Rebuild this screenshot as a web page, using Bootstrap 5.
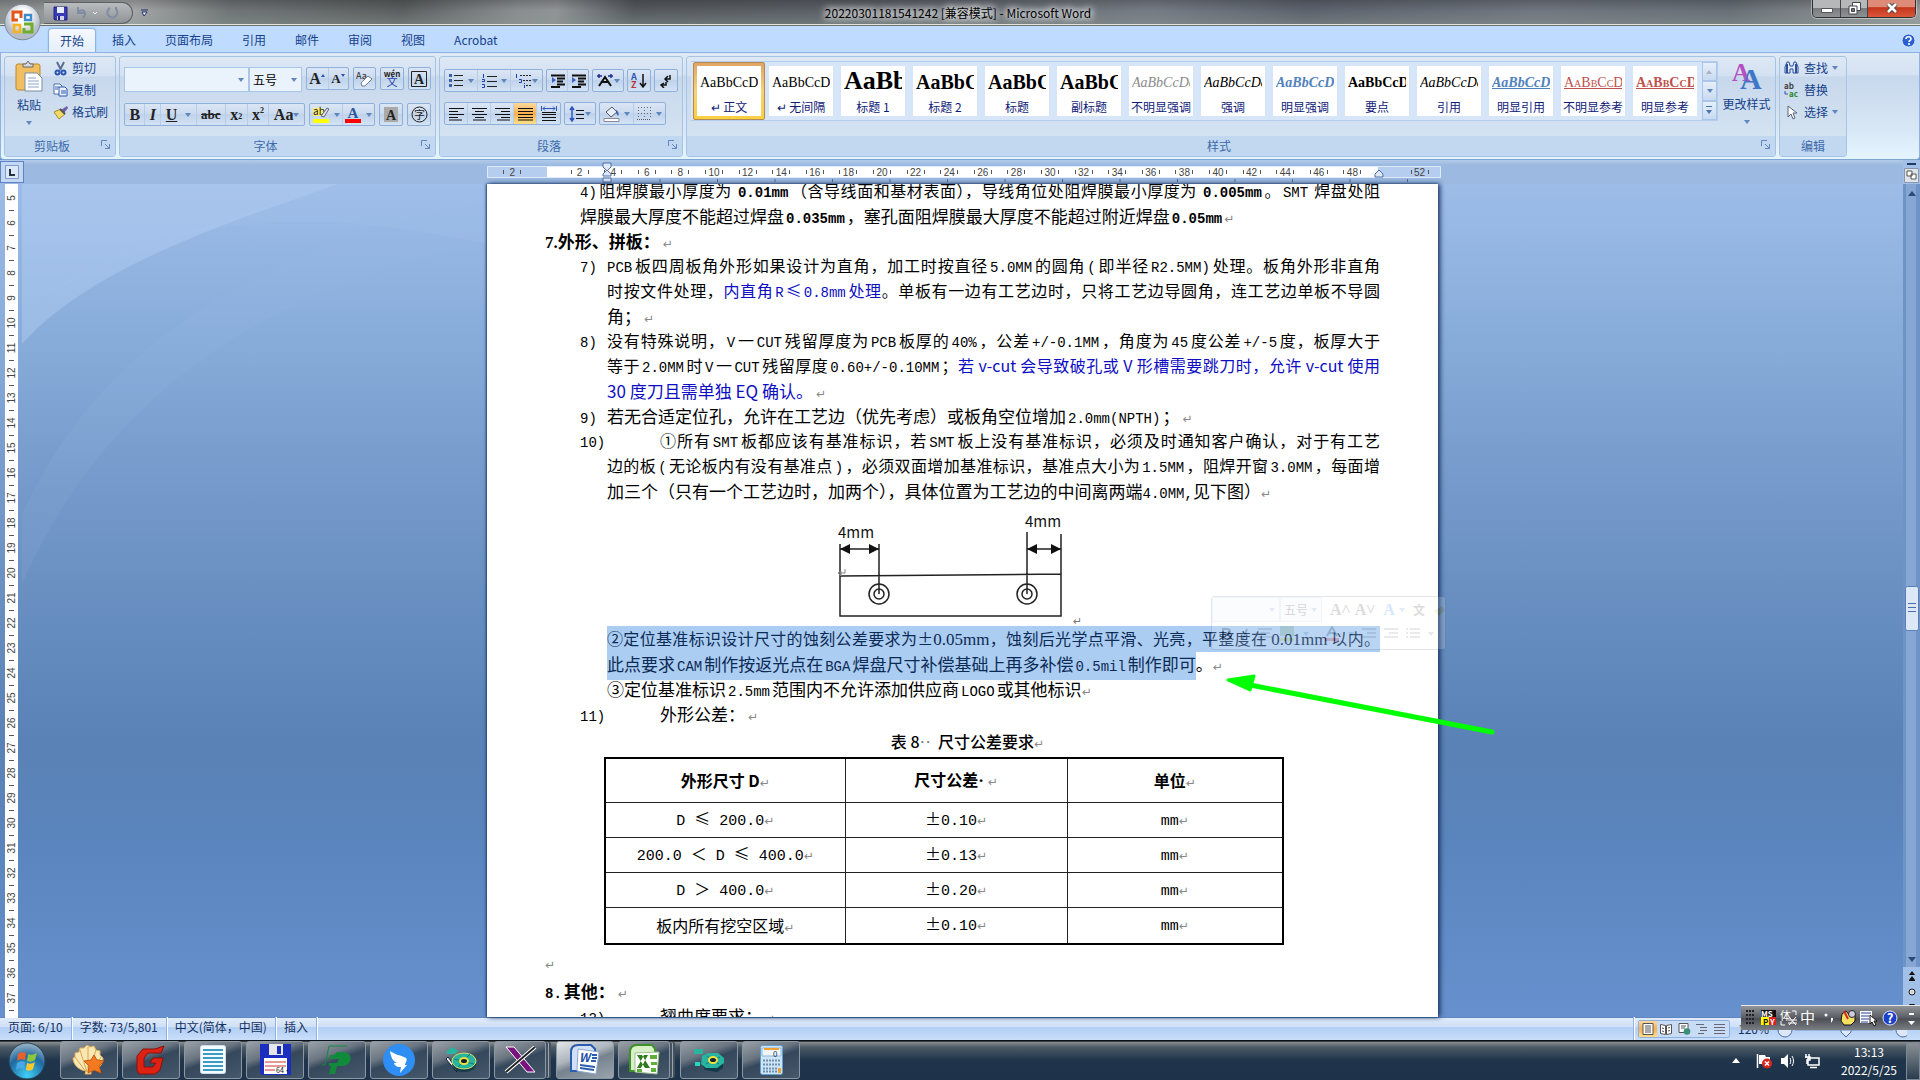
<!DOCTYPE html>
<html lang="zh-CN">
<head>
<meta charset="utf-8">
<meta name="viewport" content="width=device-width, initial-scale=1">
<title>20220301181541242 [兼容模式] - Microsoft Word</title>
<link href="https://cdn.jsdelivr.net/npm/bootstrap@5.3.0/dist/css/bootstrap.min.css" rel="stylesheet">
<style>
body{font:12px/16px "Noto Sans CJK SC",sans-serif;color:#15428b;height:100vh;overflow:hidden;background:#6690cc}
svg{display:block;flex:none}
button,select{font-family:inherit}
.btn{--bs-btn-padding-x:0px;--bs-btn-padding-y:0px;--bs-btn-font-size:12px;--bs-btn-line-height:16px;--bs-btn-border-radius:0;--bs-btn-border-width:0;--bs-btn-color:#15428b}
/* title bar */
.titlebar{flex:none;height:26px;background:linear-gradient(#0003,#0000 40%,#8b9a9366 92%,#e8eee4 94%,#333 100%),linear-gradient(100deg,#8a8d8e 0,#a5a7a8 7%,#707476 12%,#5b5e60 21%,#8a8d90 27%,#909396 29%,#55595e 33%,#5d6269 46%,#757b84 60%,#5c626c 68%,#70767f 80%,#686f77 90%,#9a9d9f 100%)}
.doctitle{color:#000;line-height:26px;text-shadow:0 0 6px #fff,0 0 8px #ffffffcc,0 0 10px #fff}
.sidecap{flex:1 1 0}
.quick{margin:2px 0 0 44px;width:89px;height:22px;border:1px solid #5d6063;border-left:0;border-radius:0 12px 12px 0;background:linear-gradient(#b9bcbe,#909395);padding:0 0 0 9px;gap:8px}
.winbtns{width:104px;height:18px;border:1px solid #2e3032;border-top:0;border-radius:0 0 5px 5px;box-shadow:0 0 0 1px #ffffff66;overflow:hidden}
.winbtns .btn{background:linear-gradient(#b5b7b9 0 45%,#77797c 46%,#8f9294);border-right:1px solid #444}
.winbtns .btn.shut{background:linear-gradient(#dd8a78 0 40%,#c5351b 45%,#d9573a);border:0}
.winmin{width:28px}
.winmax{width:27px}
.orb{left:4px;top:3px;width:37px;height:38px;z-index:5}
/* tabs */
.tabrow{flex:none;height:26px;background:#bfdbff;padding-left:48px}
.tabrow a{padding:0 14px;height:24px;line-height:23px;margin-right:1px;color:#15428b;text-decoration:none;border:0}
.tabrow a.now{background:linear-gradient(#f6faff,#e5eefb);border:1px solid #8db2e3;border-bottom:0;border-radius:4px 4px 0 0;padding:0 11px;margin-right:2px;box-shadow:0 0 2px #7fd0e8}
/* ribbon */
.ribbon{flex:none;height:108px;padding:3px 4px 2px 3px;gap:3px;background:linear-gradient(#dfe9f5,#d4e2f3 20%,#c7d8ed 22%,#d9e8f6 75%,#e3f4ff 97%);border:1px solid #8db2e3;border-radius:0 0 4px 4px;border-bottom:1px solid #7fa5d0}
.grp{border:1px solid #a7c3e3;border-radius:3px;background:linear-gradient(#dee8f5,#d3e1f2 19%,#c8d8ec 20%,#d8e6f3);overflow:hidden;box-shadow:0 0 1px #f4fbff}
.g-clip{width:112px}.g-font{width:317px}.g-para{width:244px}.g-style{width:1090px}.g-edit{width:68px}
.grpname{height:20px;background:#c1d8f0;color:#3e6aaa;line-height:20px;text-align:center}
.grpname svg{position:absolute;right:5px;top:4px}
.bset{border:1px solid #8fb0da;border-radius:2px;height:23px;background:linear-gradient(#dbe6f5,#cbdaee 48%,#bfd2ea 50%,#d3e3f5)}
.bset .btn{flex:1 1 auto;display:flex;align-items:center;justify-content:center;color:#222}
.bset .btn+.btn{border-left:1px solid #b6cde9}
.w24{width:24px}.w32{width:32px}.w44{width:44px}.w67{width:67px}.w99{width:99px}.w117{width:117px}.w182{width:182px}
.frow1{padding-top:10px}.frow2{padding-top:11px}.prow1{padding-top:12px;gap:3px}.prow2{padding-top:10px;gap:3px}
.serifb{font:bold 16px/20px "Liberation Serif",serif}
.bset .sm13{font-size:13px}
.bset .tiny{font-size:8px}
.combo{height:25px;border:1px solid #a9c5e8;background:#eaf2fb;appearance:none;font-size:12px;color:#000;padding:0 3px;border-radius:0}
.c-name{width:125px}.c-size{width:53px}
.dn{border:4px solid transparent;border-top-color:#5f86bd;border-bottom:0;border-left-width:3px;border-right-width:3px;display:inline-block;flex:none}
.combowrap .dn{position:absolute;right:5px;top:11px}
.lit{background:linear-gradient(#fbd9a0,#f8b04c 50%,#fde08a)!important}
.gallery{width:1027px;height:60px;border:1px solid #b3cdeb;border-left:0;background:#d6e6f8;padding-left:2px}
.sty{width:72px;height:58px;padding:4px!important;flex:none}
.sty .face{background:#fff;width:64px;height:50px;overflow:hidden;color:#000;padding:0 3px}
.sty .face b{display:block;height:33px;line-height:33px;overflow:hidden;white-space:nowrap;text-align:left;font-family:"Liberation Serif",serif;font-size:14px;font-weight:400}
.sty .face span{display:block;color:#101a78;line-height:16px;white-space:nowrap;margin:0 -3px}
.sty.picked{background:linear-gradient(#e0a566,#f6d27a,#f9cf40);border:1px solid #b58a50;border-radius:2px;padding:3px!important}
.sty .face .h1x{font-size:26px;font-weight:700;line-height:30px}
.sty .face .h2x{font-size:20px;font-weight:700}
.cgrey{color:#8a8a8a}.cblue{color:#4f81bd}.cred{color:#c0504d;font-variant:small-caps}
.galscroll{width:15px;margin-left:auto}
.galscroll .btn{flex:1;border:1px solid #a9c5e8;background:linear-gradient(#e6effa,#c8daf0);display:flex;align-items:center;justify-content:center}
.iconrow{height:22px;display:flex!important;align-items:center;gap:4px;white-space:nowrap}
/* rulers and work area */
.hrule{flex:none;height:24px;background:linear-gradient(#b3cbea,#9cbae1 20%)}
.tabstop{width:24px;height:22px;border:1px solid #5d82c6;background:#c5d8f3;margin-top:1px}
.scrollcol{width:17px;background:#a3c0e8}
.work{flex:1 1 0;min-height:0;background:linear-gradient(#9dbce8,#86abd9 20%,#7398c9 38%,#5a82b6 67%,#5a84bc 78%,#6791ce 100%)}
.vrule{width:22px}
.sheet{width:951px;background:#fff;box-shadow:2px 0 5px #14305c,-1px 0 2px #2a4a7c;overflow:hidden;padding:0 58px}
.deskarc{left:0;top:0;z-index:0}
/* document text */
.doc{margin-top:-6px;color:#000;font-size:17px;line-height:25px;font-weight:400}
.doc p{margin:0;height:25px;white-space:nowrap;display:flex;align-items:baseline}
.ind1{padding-left:35px}
.no{width:27px;flex:none}
.no2{width:80px;flex:none}
.jl{flex:1;text-align:justify;text-align-last:justify;font-size:16px;white-space:nowrap}
.hw{font-family:"Liberation Mono","Noto Sans CJK SC",monospace;font-size:14px;margin:0 2px}
.tm{font-family:"Liberation Serif",serif;font-size:17px}
.blue{color:#0d0dc4}
.cr{font:12px/25px "DejaVu Sans",sans-serif;color:#888;margin-left:3px}
.picked-text{background:#abcdf1;color:#0b2a55}
.tolcap{height:30px;line-height:30px;text-align:center;font-size:16px;font-weight:500;padding-left:10px}
.tol{width:680px;margin-left:59px;border-collapse:collapse;border:2px solid #000;font-size:16px;line-height:22px;text-align:center;margin-top:1px}
.tol th,.tol td{border:1px solid #222;height:35px;padding:0}
.tol th{height:44px;font-weight:700}
.tol tr:last-child td{height:37px}
.tol .c1{width:240px}.tol .c2{width:222px}
.tol .hw{font-size:15px;margin:0}
.tol .ge{font:16px/22px "Noto Sans CJK SC",sans-serif}
.tol .cr{margin-left:0;line-height:16px}
/* floating items */
.arrowlay{left:1220px;top:668px;z-index:4}
.minibar{left:1211px;top:596px;width:235px;height:54px;z-index:3;opacity:.17;border:1px solid #5a6f90;border-radius:3px;background:#fff;color:#333}
.minibar .c-name{width:68px}.minibar .c-size{width:42px}
.hl-y{border-bottom:3px solid #dd0}.hl-r{border-bottom:3px solid #f00}
.langbar{right:0;bottom:50px;width:179px;height:25px;z-index:5;background:linear-gradient(#e8e8e8 0 4%,#8e9196 6%,#5b5e64 50%,#4c4f55 55%,#7a7d82);color:#fff}
/* status + taskbar */
.status{flex:none;height:23px;background:linear-gradient(#5f86bd 0 4%,#dfebfa 5%,#cfe0f7 42%,#b3cff5 46%,#c9def9);color:#15315f;line-height:20px}
.status .pane{border-right:1px solid #8fb2e2;box-shadow:1px 0 0 #fff;padding:0 8px 0 8px}
.statright{width:286px}
.views{border:1px solid #8fb0de;border-radius:2px;height:18px;background:#c8dcf6}
.views .btn{width:18px;height:16px;display:flex;align-items:center;justify-content:center}
.taskbar{flex:none;height:40px;background:linear-gradient(#0a1119 0 3%,#8a8f90 5%,#4c5a66 18%,#20354b 50%,#1d3349);gap:4px;padding-top:1px;color:#fff}
.startbtn{width:56px}
.tb{width:58px;height:38px;border:1px solid #8b97a3!important;border-radius:3px!important;background:linear-gradient(160deg,#9aa0a6 0,#6b7682 35%,#35485c 50%,#46586b 100%);display:flex;align-items:center;justify-content:center;flex:none}
.tb.now{background:linear-gradient(160deg,#e4e6e8,#adb5bd 40%,#76838f 55%,#98a3ad)}
.tb.stack2{width:52px;box-shadow:3px 0 0 -1px #43515f,4px 0 0 -1px #9aa5b0,6px 0 0 -1px #43515f;margin-right:6px}
.clock{width:66px;text-align:center;line-height:18px}
.peek{width:14px;border:1px solid #7c8893;height:38px;background:linear-gradient(#8b9296,#2a3c4f)}
</style>
</head>
<body class="d-flex flex-column">

<header class="titlebar d-flex position-relative">
  <div class="sidecap d-flex">
    <div class="quick d-flex align-items-center">
      <button class="btn" aria-label="保存"><svg width="15" height="15"><path d="M1 1h13v13H2l-1-1z" fill="#3a3ab8" stroke="#22227a"/><path d="M4 1h7v6H4z" fill="#e8ecff"/><path d="M4 10h7v4H4z" fill="#cfd3ea"/><path d="M5 10h2v4H5z" fill="#22227a"/></svg></button>
      <button class="btn" aria-label="撤消"><svg width="22" height="14"><path d="M2 1v6h6M2 7c4-6 10-1 5 5" fill="none" stroke="#7f8ca2" stroke-width="2"/><path d="M17 6l2 2 2-2" fill="none" stroke="#eee"/></svg></button>
      <button class="btn" aria-label="恢复"><svg width="13" height="14"><path d="M4 2a5 5 0 1 0 6 1V1" fill="none" stroke="#7f8ca2" stroke-width="2"/></svg></button>
    </div>
    <button class="btn ms-2" aria-label="自定义快速访问工具栏"><svg width="8" height="8"><path d="M0 1h7M1 3h5l-3 4z" stroke="#1b2f70" fill="#fff"/></svg></button>
  </div>
  <div class="doctitle">20220301181541242 [兼容模式] - Microsoft Word</div>
  <div class="sidecap d-flex justify-content-end pe-1">
    <div class="winbtns d-flex">
      <button class="btn winmin" aria-label="最小化"><svg class="mx-auto mt-1" width="12" height="5"><path d="M.5.5h11v4H.5z" fill="#fff" stroke="#555"/></svg></button>
      <button class="btn winmax" aria-label="还原"><svg class="mx-auto" width="13" height="13"><path d="M4.500.5h8v8h-8z" fill="#fff" stroke="#444"/><path d="M1 4h8v8H1z" fill="#fff" stroke="#444"/><path d="M3.500 6.500h3v3h-3z" fill="#777" stroke="#444"/></svg></button>
      <button class="btn shut flex-fill" aria-label="关闭"><svg class="mx-auto" width="12" height="11"><path d="M2 1l8 8M10 1L2 9" stroke="#444" stroke-width="4.500"/><path d="M2 1l8 8M10 1L2 9" stroke="#fff" stroke-width="2.600"/></svg></button>
    </div>
  </div>
  <button class="btn orb position-absolute" aria-label="Office 按钮"><svg width="38" height="38" viewBox="0 0 38 38"><defs><radialGradient id="og" cy=".35"><stop offset=".4" stop-color="#fff"/><stop offset="1" stop-color="#b4bcc9"/></radialGradient></defs><circle cx="18.500" cy="19" r="17.800" fill="url(#og)" stroke="#7d8794"/><g fill="none" stroke-width="3"><path d="M17 15V9H9v8h5" stroke="#e2561b"/><path d="M21 17h6v-5h-6z" stroke="#3f8ccc" stroke-width="2.400"/><path d="M16 22H10v7h6z" stroke="#f6b21c" stroke-width="2.600"/><path d="M20 21h8v8h-8v-4" stroke="#6fae2c"/></g></svg></button>
</header>

<nav class="tabrow d-flex align-items-end">
  <a class="now" href="#">开始</a><a href="#">插入</a><a href="#">页面布局</a><a href="#">引用</a><a href="#">邮件</a><a href="#">审阅</a><a href="#">视图</a><a href="#">Acrobat</a>
  <button class="btn ms-auto me-1 mb-1" aria-label="帮助"><svg width="15" height="15"><circle cx="7.500" cy="7.500" r="6.500" fill="#2a5fd0" stroke="#cfe0ff"/><path d="M5 6c0-3 5-3 5 0 0 2-2 1-2 3M8 10v2" fill="none" stroke="#fff" stroke-width="1.600"/></svg></button>
</nav>

<section class="ribbon d-flex">
  <!-- clipboard -->
  <div class="grp g-clip d-flex flex-column">
    <div class="d-flex flex-fill">
      <button class="btn d-flex flex-column align-items-center ms-2 w32"><svg class="mt-1" width="28" height="32"><rect x="1" y="3" width="24" height="26" rx="2" fill="#f0bf62" stroke="#b98930"/><path d="M8 5V3h3l2-3 2 3h3v3H8z" fill="#d9dde2" stroke="#666"/><path d="M10 12h12l5 5v13H10z" fill="#fff" stroke="#7a8ba5"/><path d="M13 17h8m-8 3h11m-11 3h11m-11 3h11" stroke="#8ba4c8"/></svg><span class="mt-1">粘贴</span><i class="dn mt-2"></i></button>
      <div class="ms-2">
        <button class="btn iconrow"><svg width="15" height="15"><path d="M4 1l4 8M11 1L7 9" stroke="#5a6f95" stroke-width="2"/><circle cx="4.500" cy="11.500" r="2" fill="none" stroke="#2b56b0" stroke-width="2"/><circle cx="10.500" cy="11.500" r="2" fill="none" stroke="#2b56b0" stroke-width="2"/></svg>剪切</button>
        <button class="btn iconrow"><svg width="15" height="14"><path d="M1 1h6l2 2v8H1z" fill="#fff" stroke="#4b6ea8"/><path d="M6 4h6l2 2v7H6z" fill="#eaf2ff" stroke="#2b56b0"/><path d="M2 4h4M2 6h3M8 8h5M8 10h5" stroke="#2b56b0"/></svg>复制</button>
        <button class="btn iconrow"><svg width="15" height="15"><path d="M8 5l6-4 1 2-4 5z" fill="#6f5fa8"/><path d="M1 7l7-3 4 5-6 5z" fill="#f3d968" stroke="#a78a28"/><path d="M7 4l5 5" stroke="#555" stroke-width="2"/></svg>格式刷</button>
      </div>
    </div>
    <div class="grpname position-relative pe-3">剪贴板<svg width="9" height="9"><path d="M.5 6V.5H6M4 4l4 4M8.500 4v4.500H4" fill="none" stroke="#5f86bd"/></svg></div>
  </div>
  <!-- font -->
  <div class="grp g-font d-flex flex-column">
    <div class="flex-fill px-1">
      <div class="d-flex gap-1 frow1">
        <div class="d-flex">
          <div class="combowrap position-relative"><select class="combo c-name" aria-label="字体"><option></option></select><i class="dn"></i></div>
          <div class="combowrap position-relative"><select class="combo c-size" aria-label="字号"><option>五号</option></select><i class="dn"></i></div>
        </div>
        <div class="bset d-flex w44"><button class="btn serifb">A<svg width="5" height="12"><path d="M0 4h4L2 1z" fill="#2b56b0"/></svg></button><button class="btn serifb sm13">A<svg width="5" height="12"><path d="M0 1h4L2 4z" fill="#2b56b0"/></svg></button></div>
        <div class="bset d-flex w24"><button class="btn" aria-label="清除格式"><svg width="17" height="17"><text x="0" y="9" font-size="9" fill="#222">Aa</text><path d="M5 13l7-7 4 3-7 7H6z" fill="#fff" stroke="#6b7f9c"/></svg></button></div>
        <div class="bset d-flex w24"><button class="btn" aria-label="拼音指南"><svg width="20" height="20"><text x="10" y="8" font-size="8" font-weight="bold" text-anchor="middle" fill="#222">wén</text><text x="10" y="17" font-size="11" text-anchor="middle" fill="#1f3fb0">文</text></svg></button></div>
        <div class="bset d-flex w24"><button class="btn" aria-label="字符边框"><svg width="16" height="16"><path d="M.5.5h15v15H.5z" fill="none" stroke="#222"/><text x="8" y="13" font-family="Liberation Serif" font-size="14" font-weight="bold" text-anchor="middle" fill="#222">A</text></svg></button></div>
      </div>
      <div class="d-flex gap-1 frow2">
        <div class="bset d-flex w182">
          <button class="btn serifb">B</button><button class="btn serifb fst-italic">I</button><button class="btn serifb"><u>U</u>&nbsp;<i class="dn ms-1"></i></button><button class="btn serifb sm13"><s>abc</s></button><button class="btn serifb">x<sub class="tiny">2</sub></button><button class="btn serifb">x<sup class="tiny">2</sup></button><button class="btn serifb">Aa<i class="dn"></i></button>
        </div>
        <div class="bset d-flex w67">
          <button class="btn" aria-label="突出显示"><svg width="18" height="18"><path d="M1 2h10v8H1z" fill="#fff36b"/><text x="1" y="9" font-size="10" fill="#222">ab</text><path d="M9 10l6-8 2 1-5 8z" fill="#dde" stroke="#667"/><path d="M1 13h16v4H1z" fill="#ff0"/></svg><i class="dn ms-1"></i></button>
          <button class="btn" aria-label="字体颜色"><svg width="17" height="18"><text x="8" y="12" font-family="Liberation Serif" font-size="15" font-weight="bold" text-anchor="middle" fill="#2b56a0">A</text><path d="M0 13h16v4H0z" fill="#f00"/></svg><i class="dn ms-1"></i></button>
        </div>
        <div class="bset d-flex w24"><button class="btn" aria-label="字符底纹"><svg width="14" height="16"><path d="M0 0h14v15H0z" fill="#a9a9a9"/><text x="7" y="13" font-family="Liberation Serif" font-size="14" font-weight="bold" text-anchor="middle" fill="#222">A</text></svg></button></div>
        <div class="bset d-flex w24"><button class="btn" aria-label="带圈字符"><svg width="17" height="17"><circle cx="8.500" cy="8.500" r="7.500" fill="none" stroke="#222"/><text x="8.500" y="12.500" font-size="11" text-anchor="middle" fill="#222">字</text></svg></button></div>
      </div>
    </div>
    <div class="grpname position-relative pe-4">字体<svg width="9" height="9"><path d="M.5 6V.5H6M4 4l4 4M8.500 4v4.500H4" fill="none" stroke="#5f86bd"/></svg></div>
  </div>
  <!-- paragraph -->
  <div class="grp g-para d-flex flex-column">
    <div class="flex-fill px-1">
      <div class="d-flex prow1">
        <div class="bset d-flex w99">
          <button class="btn" aria-label="项目符号"><svg width="15" height="15"><path d="M5 2.500h9M5 7.500h9M5 12.500h9" stroke="#222"/><path d="M0 1h3v3H0zM0 6h3v3H0zM0 11h3v3H0z" fill="#3b62a8"/></svg><i class="dn ms-1"></i></button>
          <button class="btn" aria-label="编号"><svg width="15" height="16"><path d="M5 3.500h10M5 8.500h10M5 13.500h10" stroke="#222"/><path d="M1.500 1v4M0 6.500h2.500v2H0M0 11.500h2.500v3H0" fill="none" stroke="#1f3fb0"/></svg><i class="dn ms-1"></i></button>
          <button class="btn" aria-label="多级列表"><svg width="17" height="16"><path d="M5 2.500h11M8 7.500h8M11 12.500h5" stroke="#222" stroke-dasharray="2 1"/><path d="M1.500 1v4M4 6.500h2.500v3H4M9.500 10v1M9.500 12v3" fill="none" stroke="#1f3fb0"/></svg><i class="dn"></i></button>
        </div>
        <div class="bset d-flex w44">
          <button class="btn" aria-label="减少缩进"><svg width="16" height="14"><path d="M2 1.500h14M8 4.500h8M8 7.500h6M8 10.500h8M2 13h9" stroke="#111" stroke-width="2"/><path d="M7 6L3 3v6z" fill="#3b62c8"/></svg></button>
          <button class="btn" aria-label="增加缩进"><svg width="16" height="14"><path d="M2 1.500h14M8 4.500h8M8 7.500h6M8 10.500h8M2 13h9" stroke="#111" stroke-width="2"/><path d="M2 3l4 3-4 3z" fill="#3b62c8"/></svg></button>
        </div>
        <div class="bset d-flex w32"><button class="btn" aria-label="中文版式"><svg width="17" height="15"><path d="M2 13l6-9 6 9M5 9h6" fill="none" stroke="#111" stroke-width="2"/><path d="M0 3h5M11 3h5M2 1v4M14 1v4" stroke="#1b2f90" stroke-width="1.500"/></svg><i class="dn"></i></button></div>
        <div class="bset d-flex w24"><button class="btn" aria-label="排序"><svg width="16" height="17"><text x="0" y="8" font-size="9" font-weight="bold" fill="#2b56b0">A</text><text x="0" y="16" font-size="9" font-weight="bold" fill="#b33">Z</text><path d="M12 2v12M9 11l3 4 3-4" fill="none" stroke="#111" stroke-width="1.500"/></svg></button></div>
        <div class="bset d-flex w24"><button class="btn" aria-label="显示编辑标记"><svg width="13" height="14"><path d="M10 1v4H5M8 2L5 5l3 3M6 8v3H2M4 9l-3 2 3 3" fill="none" stroke="#111" stroke-width="1.500"/></svg></button></div>
      </div>
      <div class="d-flex prow2">
        <div class="bset d-flex w117">
          <button class="btn" aria-label="左对齐"><svg width="15" height="14"><path d="M0 1.500h15M0 4.500h9M0 7.500h15M0 10.500h9M0 13h13" stroke="#111"/></svg></button>
          <button class="btn" aria-label="居中"><svg width="15" height="14"><path d="M0 1.500h15M3 4.500h9M0 7.500h15M3 10.500h9M1 13h13" stroke="#111"/></svg></button>
          <button class="btn" aria-label="右对齐"><svg width="15" height="14"><path d="M0 1.500h15M6 4.500h9M0 7.500h15M6 10.500h9M2 13h13" stroke="#111"/></svg></button>
          <button class="btn lit" aria-label="两端对齐"><svg width="15" height="14"><path d="M0 1.500h15M0 4.500h15M0 7.500h15M0 10.500h15M0 13h15" stroke="#111"/></svg></button>
          <button class="btn" aria-label="分散对齐"><svg width="16" height="16"><path d="M1 8.500h14M1 11.500h14M1 14.500h14M1 6.500h14" stroke="#111"/><path d="M.5 0v5M15.500 0v5M2 2.500h12M4 .5l-2 2 2 2M12 .5l2 2-2 2" fill="none" stroke="#2b56c0"/></svg></button>
        </div>
        <div class="bset d-flex w32"><button class="btn" aria-label="行距"><svg width="16" height="16"><path d="M3 1v14M1 4l2-3 2 3M1 12l2 3 2-3" fill="none" stroke="#2b56c0" stroke-width="1.500"/><path d="M7 4.500h8M7 8.500h8M7 12.500h8" stroke="#111"/></svg><i class="dn"></i></button></div>
        <div class="bset d-flex w67">
          <button class="btn" aria-label="底纹"><svg width="17" height="17"><path d="M3 7l6-5 5 5-6 5z" fill="#e8eef8" stroke="#556"/><path d="M13 5c3 1 3 5 2 6l-2-3" fill="#3b62a8"/><path d="M1 13.500h15v3H1z" fill="#fff" stroke="#889"/></svg><i class="dn ms-1"></i></button>
          <button class="btn" aria-label="边框"><svg width="15" height="15"><path d="M1.500 1v12M7.500 1v12M13.500 1v12M1 1.500h13M1 7.500h13" stroke="#667" stroke-dasharray="1 2"/><path d="M0 13.500h14" stroke="#556" stroke-dasharray="1 1"/></svg><i class="dn ms-1"></i></button>
        </div>
      </div>
    </div>
    <div class="grpname position-relative pe-4">段落<svg width="9" height="9"><path d="M.5 6V.5H6M4 4l4 4M8.500 4v4.500H4" fill="none" stroke="#5f86bd"/></svg></div>
  </div>
  <!-- styles -->
  <div class="grp g-style d-flex flex-column">
    <div class="d-flex flex-fill align-items-start ps-1">
      <div class="gallery d-flex mt-1">
        <button class="btn sty picked"><div class="face"><b>AaBbCcDd</b><span>↵ 正文</span></div></button>
        <button class="btn sty"><div class="face"><b>AaBbCcDd</b><span>↵ 无间隔</span></div></button>
        <button class="btn sty"><div class="face"><b class="h1x">AaBb</b><span>标题 1</span></div></button>
        <button class="btn sty"><div class="face"><b class="h2x">AaBbC</b><span>标题 2</span></div></button>
        <button class="btn sty"><div class="face"><b class="h2x">AaBbC</b><span>标题</span></div></button>
        <button class="btn sty"><div class="face"><b class="h2x">AaBbC</b><span>副标题</span></div></button>
        <button class="btn sty"><div class="face"><b class="fst-italic cgrey">AaBbCcDd</b><span>不明显强调</span></div></button>
        <button class="btn sty"><div class="face"><b class="fst-italic">AaBbCcDd</b><span>强调</span></div></button>
        <button class="btn sty"><div class="face"><b class="fst-italic fw-bold cblue">AaBbCcDd</b><span>明显强调</span></div></button>
        <button class="btn sty"><div class="face"><b class="fw-bold">AaBbCcDd</b><span>要点</span></div></button>
        <button class="btn sty"><div class="face"><b class="fst-italic">AaBbCcDd</b><span>引用</span></div></button>
        <button class="btn sty"><div class="face"><b class="fst-italic fw-bold text-decoration-underline cblue">AaBbCcDd</b><span>明显引用</span></div></button>
        <button class="btn sty"><div class="face"><b class="text-decoration-underline cred">AaBbCcDd</b><span>不明显参考</span></div></button>
        <button class="btn sty"><div class="face"><b class="fw-bold text-decoration-underline cred">AaBbCcDd</b><span>明显参考</span></div></button>
        <div class="galscroll d-flex flex-column">
          <button class="btn" aria-label="上一行"><svg width="7" height="4"><path d="M0 4h6L3 0z" fill="#a8b2c0"/></svg></button>
          <button class="btn" aria-label="下一行"><i class="dn"></i></button>
          <button class="btn" aria-label="其他"><svg width="7" height="8"><path d="M0 0h6v1H0zM0 4h6L3 8z" fill="#4b74b0"/></svg></button>
        </div>
      </div>
      <button class="btn d-flex flex-column align-items-center flex-fill"><svg class="mt-1" width="30" height="31"><g font-family="Liberation Serif" font-weight="bold"><text x="0" y="20" font-size="25" fill="#b34fc0">A</text><text x="8" y="28" font-size="30" fill="#3f78c8">A</text></g></svg><span class="mt-1">更改样式</span><i class="dn mt-2"></i></button>
    </div>
    <div class="grpname position-relative pe-4">样式<svg width="9" height="9"><path d="M.5 6V.5H6M4 4l4 4M8.500 4v4.500H4" fill="none" stroke="#5f86bd"/></svg></div>
  </div>
  <!-- editing -->
  <div class="grp g-edit d-flex flex-column">
    <div class="flex-fill ps-1">
      <button class="btn iconrow"><svg width="16" height="14"><path d="M1 12V6l2-5h2l1 4h3l1-4h2l2 5v6h-5V8H6v4z" fill="#dfe8f6" stroke="#2b4f98"/><path d="M3 3v9M12 3v9" stroke="#2b4f98" stroke-width="2"/></svg>查找<i class="dn"></i></button>
      <button class="btn iconrow"><svg width="16" height="16"><text x="0" y="7" font-size="8" font-weight="bold" fill="#444">ab</text><text x="5" y="15" font-size="8" font-weight="bold" fill="#2a8a2a">ac</text><path d="M1 9v3h3" fill="none" stroke="#2b56b0"/></svg>替换</button>
      <button class="btn iconrow"><svg width="16" height="15"><path d="M4 1v11l3-3 2 5 2-1-2-5h4z" fill="#fff" stroke="#56657d"/></svg>选择<i class="dn"></i></button>
    </div>
    <div class="grpname">编辑</div>
  </div>
</section>

<section class="hrule d-flex">
  <button class="btn tabstop" aria-label="制表符"><svg class="mx-auto" width="14" height="14"><path d="M.5.5h13v13H.5z" fill="#dce8f8" stroke="#7d9ccc"/><path d="M5 4v6h5" fill="none" stroke="#234" stroke-width="2"/></svg></button>
  <div class="flex-fill d-flex justify-content-center"><svg id="hr" width="954" height="24"></svg></div>
  <div class="scrollcol"><svg width="17" height="24"><path d="M4 3h9v2H4z" fill="#1f3a68"/><path d="M1.500 8.500h14v14h-14z" fill="#dfe3ea" stroke="#8b98ac"/><path d="M4 11h5v5H4zM8 14h5v5H8z" fill="#fff" stroke="#555"/></svg></div>
</section>

<main class="work d-flex position-relative">
  <svg class="deskarc position-absolute" width="487" height="620"><path d="M22 0h316C210 45 90 85 22 160z" fill="#b8d2f4" opacity=".4"/><path d="M22 130C120 50 260 10 487 60V0H338C200 40 80 80 22 130z" fill="#a9c8f0" opacity=".2"/><path d="M22 330C100 160 260 60 487 20v40C280 100 110 200 22 400z" fill="#9cbce8" opacity=".12"/></svg>
  <div class="vrule position-relative"><svg id="vr" width="22" height="834"></svg></div>
  <div class="flex-fill d-flex justify-content-center position-relative">
    <article class="sheet"><div class="doc">
      <p class="ind1"><span class="jl"><span class="hw ms-0">4)</span>阻焊膜最小厚度为 <span class="hw fw-bold">0.01mm</span>（含导线面和基材表面），导线角位处阻焊膜最小厚度为 <span class="hw fw-bold">0.005mm</span>。<span class="hw">SMT</span> 焊盘处阻</span></p>
      <p class="ind1">焊膜最大厚度不能超过焊盘<span class="hw fw-bold">0.035mm</span>，塞孔面阻焊膜最大厚度不能超过附近焊盘<span class="hw fw-bold">0.05mm</span><i class="cr ms-0">↵</i></p>
      <p class="fw-bold"><span class="tm">7.</span>外形、拼板：<i class="cr">↵</i></p>
      <p class="ind1"><span class="no hw m-0">7)</span><span class="jl"><span class="hw ms-0">PCB</span>板四周板角外形如果设计为直角，加工时按直径<span class="hw">5.0MM</span>的圆角<span class="hw">(</span>即半径<span class="hw">R2.5MM)</span>处理。板角外形非直角</span></p>
      <p class="ind1"><span class="no"></span><span class="jl">时按文件处理，<span class="blue">内直角<span class="hw">R</span>≤<span class="hw">0.8mm</span>处理</span>。单板有一边有工艺边时，只将工艺边导圆角，连工艺边单板不导圆</span></p>
      <p class="ind1"><span class="no"></span>角；<i class="cr">↵</i></p>
      <p class="ind1"><span class="no hw m-0">8)</span><span class="jl">没有特殊说明，<span class="hw">V</span>一<span class="hw">CUT</span>残留厚度为<span class="hw">PCB</span>板厚的<span class="hw">40%</span>，公差<span class="hw">+/-0.1MM</span>，角度为<span class="hw">45</span>度公差<span class="hw">+/-5</span>度，板厚大于</span></p>
      <p class="ind1"><span class="no"></span><span class="jl">等于<span class="hw">2.0MM</span>时<span class="hw">V</span>一<span class="hw">CUT</span>残留厚度<span class="hw">0.60+/-0.10MM</span>；<span class="blue">若 v-cut 会导致破孔或 V 形槽需要跳刀时，允许 v-cut 使用</span></span></p>
      <p class="ind1"><span class="no"></span><span class="blue">30 度刀且需单独 EQ 确认。</span><i class="cr">↵</i></p>
      <p class="ind1"><span class="no hw m-0">9)</span>若无合适定位孔，允许在工艺边（优先考虑）或板角空位增加<span class="hw">2.0mm(NPTH)</span>；<i class="cr">↵</i></p>
      <p class="ind1"><span class="no2 hw m-0">10)</span><span class="jl">①所有<span class="hw">SMT</span>板都应该有基准标识，若<span class="hw">SMT</span>板上没有基准标识，必须及时通知客户确认，对于有工艺</span></p>
      <p class="ind1"><span class="no"></span><span class="jl">边的板<span class="hw">(</span>无论板内有没有基准点<span class="hw">)</span>，必须双面增加基准标识，基准点大小为<span class="hw">1.5MM</span>，阻焊开窗<span class="hw">3.0MM</span>，每面增</span></p>
      <p class="ind1"><span class="no"></span>加三个（只有一个工艺边时，加两个），具体位置为工艺边的中间离两端<span class="hw mx-0">4.0MM,</span>见下图）<i class="cr ms-0">↵</i></p>
      <svg width="835" height="123" viewBox="545 503 835 123" font-family="Noto Sans CJK SC" font-size="15" fill="#111"><g fill="none" stroke="#222" stroke-width="1.500"><path d="M840 544v72h221v-82M840 576l221-2M879 544v50M1027 532v62M840 549h39M1027 549h34"/><circle cx="879" cy="594" r="10"/><circle cx="879" cy="594" r="5"/><circle cx="1027" cy="594" r="10"/><circle cx="1027" cy="594" r="5"/></g><path d="M840 549l10-5v10zM879 549l-10-5v10zM1027 549l10-5v10zM1061 549l-10-5v10z"/><text x="838" y="538">4mm</text><text x="1025" y="527">4mm</text><path d="M838 573l3-2v5zM845 569v4h-5" fill="none" stroke="#888"/><text x="1073" y="625" font-family="DejaVu Sans" font-size="11" fill="#777">↵</text></svg>
      <p class="ind1"><span class="no"></span><span class="jl picked-text">②定位基准标识设计尺寸的蚀刻公差要求为±<span class="tm">0.05mm</span>，蚀刻后光学点平滑、光亮，平整度在 <span class="tm">0.01mm</span> 以内。</span></p>
      <p class="ind1"><span class="no"></span><span class="picked-text">此点要求<span class="hw">CAM</span>制作按返光点在<span class="hw">BGA</span>焊盘尺寸补偿基础上再多补偿<span class="hw">0.5mil</span>制作即可</span>。<i class="cr ms-0">↵</i></p>
      <p class="ind1"><span class="no"></span>③定位基准标识<span class="hw">2.5mm</span>范围内不允许添加供应商<span class="hw">LOGO</span>或其他标识<i class="cr ms-0">↵</i></p>
      <p class="ind1"><span class="no2 hw m-0">11)</span>外形公差：<i class="cr">↵</i></p>
      <div class="tolcap">表 8<span class="tm text-secondary">··</span>&nbsp; 尺寸公差要求<i class="cr ms-0">↵</i></div>
      <table class="tol">
        <colgroup><col class="c1"><col class="c2"><col></colgroup>
        <tr><th>外形尺寸 D<i class="cr">↵</i></th><th>尺寸公差<span class="tm">·</span> <i class="cr">↵</i></th><th>单位<i class="cr">↵</i></th></tr>
        <tr><td><span class="hw">D <span class="ge">≤</span> 200.0</span><i class="cr">↵</i></td><td>±<span class="hw">0.10</span><i class="cr">↵</i></td><td><span class="hw">mm</span><i class="cr">↵</i></td></tr>
        <tr><td><span class="hw">200.0 <span class="ge">＜</span> D <span class="ge">≤</span> 400.0</span><i class="cr">↵</i></td><td>±<span class="hw">0.13</span><i class="cr">↵</i></td><td><span class="hw">mm</span><i class="cr">↵</i></td></tr>
        <tr><td><span class="hw">D <span class="ge">＞</span> 400.0</span><i class="cr">↵</i></td><td>±<span class="hw">0.20</span><i class="cr">↵</i></td><td><span class="hw">mm</span><i class="cr">↵</i></td></tr>
        <tr><td>板内所有挖空区域<i class="cr">↵</i></td><td>±<span class="hw">0.10</span><i class="cr">↵</i></td><td><span class="hw">mm</span><i class="cr">↵</i></td></tr>
      </table>
      <p class="mt-2"><i class="cr ms-0">↵</i></p>
      <p class="fw-bold"><span class="hw ms-0">8.</span>其他：<i class="cr">↵</i></p>
      <p class="ind1"><span class="no2 hw m-0">12)</span>翘曲度要求：<i class="cr">↵</i></p>
    </div></article>
  </div>
  <div class="scrollcol d-flex flex-column align-items-center position-relative">
    <svg width="17" height="833"><path d="M0 0h17v783H0z" fill="#6f93c6"/><path d="M3 0h10v783H3z" fill="#86a6d4"/><path d="M5 12h8l-4-5z" fill="#2b4a7c"/><rect x="2.500" y="402.500" width="13" height="44" rx="2" fill="#dce8f8" stroke="#5b7fb8"/><path d="M5 419.500h8M5 423.500h8M5 427.500h8" stroke="#4b6ea8"/><path d="M5 773h8l-4 5z" fill="#2b4a7c"/><path d="M6 791l3-4 3 4zM6 796l3-4 3 4zM6 796h6v1H6z" fill="#111"/><circle cx="9" cy="808" r="3" fill="#ddd" stroke="#222"/><path d="M6 820h6l-3 4zM6 826h6l-3 4z" fill="#111"/></svg>
  </div>
</main>

<div class="minibar position-absolute">
  <div class="d-flex align-items-center gap-1">
    <div class="d-flex"><div class="combowrap position-relative"><select class="combo c-name" aria-label="浮动工具栏字体"><option></option></select><i class="dn"></i></div><div class="combowrap position-relative"><select class="combo c-size" aria-label="浮动工具栏字号"><option>五号</option></select><i class="dn"></i></div></div>
    <span class="serifb ms-1">A˄</span><span class="serifb">A˅</span><span class="serifb ms-1 text-primary">A</span><i class="dn"></i><span class="fw-bold ms-1">文</span><svg class="ms-1" width="14" height="14"><path d="M1 8l8-5 3 4-6 6z" fill="#e2b430"/></svg>
  </div>
  <div class="d-flex align-items-center gap-2 px-2 pt-1"><svg width="12" height="12"><path d="M3 1h4c4 0 4 5 0 5H3zM3 6h5c4 0 4 5 0 5H3z" fill="none" stroke="#111" stroke-width="2"/></svg><svg width="10" height="12"><path d="M7 1L3 11" stroke="#111" stroke-width="2"/></svg><svg width="14" height="12"><path d="M0 1h14M2 5h10M0 9h14" stroke="#111"/></svg><svg width="15" height="15"><path d="M0 0h14v10H0z" fill="#8a4"/><path d="M0 12h14v3H0z" fill="#dd0"/></svg><i class="dn"></i><svg class="ms-2" width="15" height="15"><path d="M2 10l5-9 5 9M4 7h6" fill="none" stroke="#124" stroke-width="2"/><path d="M0 12h14v3H0z" fill="#f00"/></svg><i class="dn"></i><svg width="14" height="12"><path d="M0 1h14M5 5h9M0 9h14" stroke="#111"/></svg><svg width="14" height="12"><path d="M0 1h14M5 5h9M0 9h14" stroke="#111"/></svg><svg width="14" height="12"><path d="M0 1h2m2 0h10M0 5h2m2 0h10M0 9h2m2 0h10" stroke="#111"/></svg><i class="dn"></i></div>
</div>
<svg class="arrowlay position-absolute" width="280" height="70" viewBox="1220 668 280 70"><path d="M1240 683L1492 732" stroke="#0f0" stroke-width="5" stroke-linecap="round"/><path d="M1228 680L1254 676L1250 690z" fill="#0f0" stroke="#0f0" stroke-width="3" stroke-linejoin="round"/></svg>

<footer class="status d-flex">
  <div class="pane">页面: 6/10</div><div class="pane">字数: 73/5,801</div><div class="pane">中文(简体，中国)</div><div class="pane">插入</div>
  <div class="flex-fill"></div>
  <div class="pane px-0"></div>
  <div class="statright d-flex align-items-center ps-1">
    <div class="views d-flex">
      <button class="btn lit" aria-label="页面视图"><svg width="12" height="12"><path d="M1 .5h10v11H1z" fill="#fff" stroke="#555"/><path d="M3 3h6M3 5h6M3 7h6M3 9h6" stroke="#555"/></svg></button>
      <button class="btn" aria-label="阅读版式"><svg width="13" height="12"><path d="M.5 1.500l5 1v9l-5-1zM11.500 1.500l-5 1v9l5-1z" fill="#fff" stroke="#555"/><path d="M2 5l2 .5M2 8l2 .5M8 5l2-.5M8 8l2-.5" stroke="#555"/></svg></button>
      <button class="btn" aria-label="Web 版式"><svg width="13" height="12"><path d="M1 .5h9v9H1z" fill="#fff" stroke="#555"/><path d="M3 3h5M3 5h4" stroke="#555"/><circle cx="9" cy="8.500" r="3.300" fill="#3a8f7a"/></svg></button>
      <button class="btn" aria-label="大纲"><svg width="12" height="11"><path d="M0 1.500h8M4 4.500h7M4 7.500h7M2 10.500h6" stroke="#667"/></svg></button>
      <button class="btn" aria-label="草稿"><svg width="12" height="11"><path d="M0 1.500h11M0 4.500h11M0 7.500h11M0 10.500h11" stroke="#667"/></svg></button>
    </div>
    <span class="ms-2">120%</span>
    <svg class="ms-2" width="130" height="22"><g fill="#dce8f8" stroke="#4b6ea8"><circle cx="8" cy="12" r="7"/><circle cx="126" cy="12" r="7"/><path d="M64 10h10v4l-5 5-5-5z"/></g><path d="M18 12h98" stroke="#6d8fc0"/></svg>
  </div>
</footer>

<div class="langbar position-absolute d-flex align-items-center">
  <svg width="179" height="25"><path d="M5 6h8M5 10h8M5 14h8M5 18h8" stroke="#222" stroke-width="2" stroke-dasharray="2 1"/><path d="M20 5h15v15H20z" fill="#111"/><path d="M20 12h8v8h-8z" fill="#ff0"/><path d="M28 12h7v8h-7z" fill="#d22"/><g font-size="8" font-weight="bold"><text x="20" y="12" fill="#fff">MS</text><text x="22" y="20" fill="#111">P</text><text x="29" y="20" fill="#fff">Y</text></g><g fill="#fff"><text x="39" y="15" font-size="11">体</text><path d="M40 16v4h4M51 6h4v4M48 12l7 8M55 12l-7 8M47 15h9M47 18h9" fill="none" stroke="#fff"/><text x="59" y="18" font-size="15">中</text><circle cx="85" cy="10" r="1.500"/><path d="M90 13h2v2l-2 3z"/></g><path d="M101 9l4-3 5 6 4-2v6l-4 4h-7l-3-4z" fill="#f4e060" stroke="#111"/><path d="M103 6l4 8" stroke="#d22" stroke-width="2"/><circle cx="111" cy="9" r="3.500" fill="#ccd" stroke="#222"/><path d="M119 6h12v12h-12z" fill="#fff"/><path d="M120 8h10M120 11h8M120 14h8M120 17h7" stroke="#22409a"/><path d="M129 10v9l2-2 2 4 2-1-2-4h3z" fill="#fff" stroke="#111"/><circle cx="149" cy="13" r="7" fill="#1c3fc8" stroke="#dfe6ff"/><text x="149" y="17.500" font-size="13" font-weight="bold" text-anchor="middle" fill="#fff">?</text><path d="M168 8h5v2h-5zM167 16h7l-3.500 4z" fill="#fff"/></svg>
</div>

<footer class="taskbar d-flex">
  <button class="btn startbtn" aria-label="开始"><svg class="ms-2" width="38" height="38"><defs><radialGradient id="sg" cy=".9" r=".9"><stop offset="0" stop-color="#3fd0f8"/><stop offset=".6" stop-color="#1f68a0"/><stop offset="1" stop-color="#9fb8c8"/></radialGradient></defs><circle cx="19" cy="19" r="18" fill="url(#sg)" stroke="#27404f"/><path d="M10 12c3-2 5-2 8-1l-1 7c-3-1-5-1-8 1z" fill="#e8602c"/><path d="M20 12c3 1 5 1 9-1l-2 7c-3 2-5 2-8 1z" fill="#8cc63f"/><path d="M9 21c3-2 5-2 8-1l-1 7c-3-1-5-1-8 1z" fill="#49a8e8"/><path d="M19 21c3 1 5 1 8-1l-2 7c-2 2-5 2-7 1z" fill="#fcc82c"/></svg></button>
  <button class="btn tb" aria-label="贝壳"><svg width="34" height="30"><path d="M13 29l1-3C6 25 1 19 1 13l2-1 0-4 4-1 1-4 4 0 3-3 3 2 4-1 2 4 4 1 0 4 3 3c0 7-5 12-12 13l0 3z" fill="#fbe7b4" stroke="#dcae5c"/><path d="M14 27L3 12M15 27L8 5M16 27V2M17 27l7-22M18 27l12-16" stroke="#d8a850"/><path d="M22 10l3 5 7 1-5 5 2 7-7-3-6 3 1-7-5-5 7-1z" fill="#f47a20" stroke="#c85a10"/></svg></button>
  <button class="btn tb" aria-label="G"><svg width="30" height="32"><path d="M28 2L25 9H12L8 14v9h9l3-4h-6l3-5h10l-3 12-5 4H3L1 26V12l6-7h12z" fill="#dd2213" stroke="#8f1008"/></svg></button>
  <button class="btn tb" aria-label="记事本"><svg width="26" height="30"><rect x=".5" y=".5" width="25" height="28" rx="2" fill="#f4fafd" stroke="#cde"/><path d="M3 5h20M3 9h20M3 13h20M3 17h20M3 21h20M3 25h20" stroke="#3a9cc0" stroke-width="2"/></svg></button>
  <button class="btn tb" aria-label="Total Commander"><svg width="31" height="32"><path d="M0 0h31v31H2l-2-2z" fill="#1a2fc0"/><path d="M9 0h14v11H9z" fill="#e4e6ea"/><path d="M17 2h4v8h-4z" fill="#1a2fc0"/><path d="M4 14h23v16H4z" fill="#fff"/><path d="M5 18h21M5 22h21M5 26h10" stroke="#c33"/><text x="16" y="29" font-size="7" fill="#111">64·</text></svg></button>
  <button class="btn tb" aria-label="P"><svg width="30" height="32"><path d="M7 2h18M7 2L3 21H0" stroke="#128a3c" fill="none"/><path d="M8 11h4l3-3h6c12 1 9 15-2 14h-4l-2 8H7l2-8H7v-3h8l2-4H8z" fill="#128a3c"/></svg></button>
  <button class="btn tb" aria-label="钉钉"><svg width="32" height="32"><circle cx="16" cy="16" r="16" fill="#2f8ef4"/><path d="M7 7c5 4 11 4 16 7 2 2-1 5-1 7h2l-7 8 1-6h-3c-3-1-4-3-4-4h3c-4-2-6-5-7-12z" fill="#fff"/></svg></button>
  <button class="btn tb" aria-label="光盘"><svg width="32" height="28"><path d="M1 13l9 11 2 2-1-4-8-11z" fill="#eee" stroke="#123"/><ellipse cx="19" cy="18" rx="12" ry="8" fill="#123a4a"/><ellipse cx="19" cy="15" rx="12" ry="8" fill="#27b5a0" stroke="#d8e060"/><path d="M9 13l20 5M13 21l12-13" stroke="#127a80"/><ellipse cx="19" cy="15" rx="4" ry="3" fill="#123" stroke="#f0e040" stroke-width="2"/><path d="M1 6l6-5 6 4-3 3H2z" fill="#27b5a0"/></svg></button>
  <button class="btn tb stack2" aria-label="X"><svg width="33" height="28"><path d="M2 1h8l21 25h-8z" fill="#7a1280" stroke="#fff"/><path d="M31 1L2 26" stroke="#fff" stroke-width="4"/><path d="M31 1L2 26" stroke="#222" stroke-width="2"/></svg></button>
  <button class="btn tb now" aria-label="Microsoft Word"><svg width="32" height="32"><path d="M2 8c0-4 2-7 7-7h13l4 4v22H2z" fill="#cfe0f8" stroke="#2b5cb0" stroke-width="2"/><path d="M9 5l21 3-3 22-19-3z" fill="#fff" stroke="#8fa9d0"/><text x="10" y="18" font-size="12" font-weight="bold" font-style="italic" fill="#1f4fa8">W</text><path d="M23 11h5M23 14h5M22 17h5M11 21l15 2M11 24l14 2" stroke="#2b5cb0" stroke-width="2"/></svg></button>
  <button class="btn tb stack2" aria-label="Microsoft Excel"><svg width="32" height="32"><path d="M2 8c0-4 2-7 7-7h15l3 4v22H2z" fill="#d8f0c8" stroke="#3f9028" stroke-width="2"/><path d="M7 9l24-1-2 22-22-2z" fill="#fff" stroke="#9fc090"/><path d="M9 11l5 0 8 13h-5zM20 11h-4L9 24h4z" fill="#2f7a1c"/><path d="M22 11h7v4h-7zM23 18h6v3h-6zM9 25h5v3H9zM23 24h5v4h-5z" fill="#5fae3c"/></svg></button>
  <button class="btn tb" aria-label="光盘 2"><svg width="32" height="28"><path d="M9 18l3 6 12 2 6-4v-5z" fill="#123a4a"/><path d="M9 10l6-3 10 0 6 5v5l-7 5H13l-5-4z" fill="#27b5a0"/><path d="M13 18l14-7M14 10l12 8" stroke="#127a80"/><ellipse cx="20" cy="14" rx="4" ry="3" fill="#123" stroke="#f0e040" stroke-width="2"/><path d="M1 3h9v5H1z" fill="#27b5a0"/><path d="M2 16h5v4H2z" fill="#27d5c0"/></svg></button>
  <button class="btn tb" aria-label="计算器"><svg width="23" height="30"><rect x=".5" y=".5" width="22" height="29" rx="2" fill="#cfe4f4" stroke="#5fa0d0"/><path d="M2 3h19v8H2z" fill="#eef6fb" stroke="#8ab8d8"/><path d="M4 3h15v2H4z" fill="#f0a030"/><text x="13" y="12" font-size="8" fill="#234">0</text><path d="M3 15.500h17M3 19.500h17M3 23.500h14M3 26.500h14" stroke="#6b8fb0" stroke-width="2" stroke-dasharray="2 1"/><path d="M18 23h3v5h-3z" fill="#e8a030"/></svg></button>
  <div class="ms-auto d-flex align-items-center">
    <svg class="me-3" width="8" height="5"><path d="M0 5h8L4 0z" fill="#fff"/></svg>
    <svg class="me-2" width="16" height="16"><path d="M1.500 1v14" stroke="#fff" stroke-width="1.500"/><path d="M3 2h6l1 2h4v7H3z" fill="#fff"/><circle cx="11" cy="10.500" r="5" fill="#d8281c"/><path d="M9 8.500l4 4M13 8.500l-4 4" stroke="#fff" stroke-width="1.500"/></svg>
    <svg class="me-2" width="16" height="16"><path d="M1 5h3l4-4v14l-4-4H1z" fill="#fff"/><path d="M10 5c1 2 1 4 0 6M12 3c2 3 2 7 0 10" fill="none" stroke="#fff"/></svg>
    <svg class="me-3" width="16" height="16"><path d="M4 5h11v7H4zM6 14.500h7M2 1v4M5 1v3M1 4h5v3H3v4" fill="none" stroke="#fff" stroke-width="1.500"/></svg>
    <div class="clock"><div>13:13</div><div>2022/5/25</div></div>
    <button class="btn peek ms-1" aria-label="显示桌面"></button>
  </div>
</footer>

<script>
// horizontal ruler: one number on every second character unit, ticks on both sides of it
(function () {
  var u = 16.8, x0 = 59, s = '<path d="M.5 6.500h953v11H.5z" fill="#b5cdee" stroke="#dfeafa"/><path d="M60 7h831v10H60z" fill="#fff"/>';
  for (var i = -2; i <= 52; i++) {
    var x = x0 + i * u;
    if (i === 0 || i === 50) continue;
    if (i % 2 === 0) {
      s += '<text x="' + x + '" y="16" font-size="10" font-family="Liberation Sans" text-anchor="middle" fill="#444">' + Math.abs(i) + '</text>';
      s += '<path d="M' + (Math.round(x - 9) + 0.5) + ' 10v4M' + (Math.round(x + 8) + 0.5) + ' 10v4" stroke="#555"/>';
    }
  }
  for (var t = 173; t < 930; t += 57.5) s += '<path d="M' + t + ' 19v3" stroke="#667"/>';
  s += '<path d="M116 3h8v4l-4 4-4-4zM116 16v-2l4-4 4 4v2zM116 18h8v4h-8z" fill="#dfe8f6" stroke="#4b6ea8"/>';
  s += '<path d="M888 17v-3l4-4 4 4v3z" fill="#dfe8f6" stroke="#4b6ea8"/>';
  document.getElementById('hr').innerHTML = s;
  // vertical ruler
  var v = '<path d="M5 0h13v834H5z" fill="#fff"/>';
  for (var n = 5; n <= 37; n++) {
    var y = 14 + (n - 5) * 25;
    v += '<text transform="translate(15 ' + y + ') rotate(-90)" font-size="10" font-family="Liberation Sans" text-anchor="middle" fill="#444">' + n + '</text><path d="M9 ' + (y + 12.5) + 'h5" stroke="#555"/>';
  }
  document.getElementById('vr').innerHTML = v;
})();
</script>
<script src="https://cdn.jsdelivr.net/npm/bootstrap@5.3.0/dist/js/bootstrap.bundle.min.js"></script>
</body>
</html>
